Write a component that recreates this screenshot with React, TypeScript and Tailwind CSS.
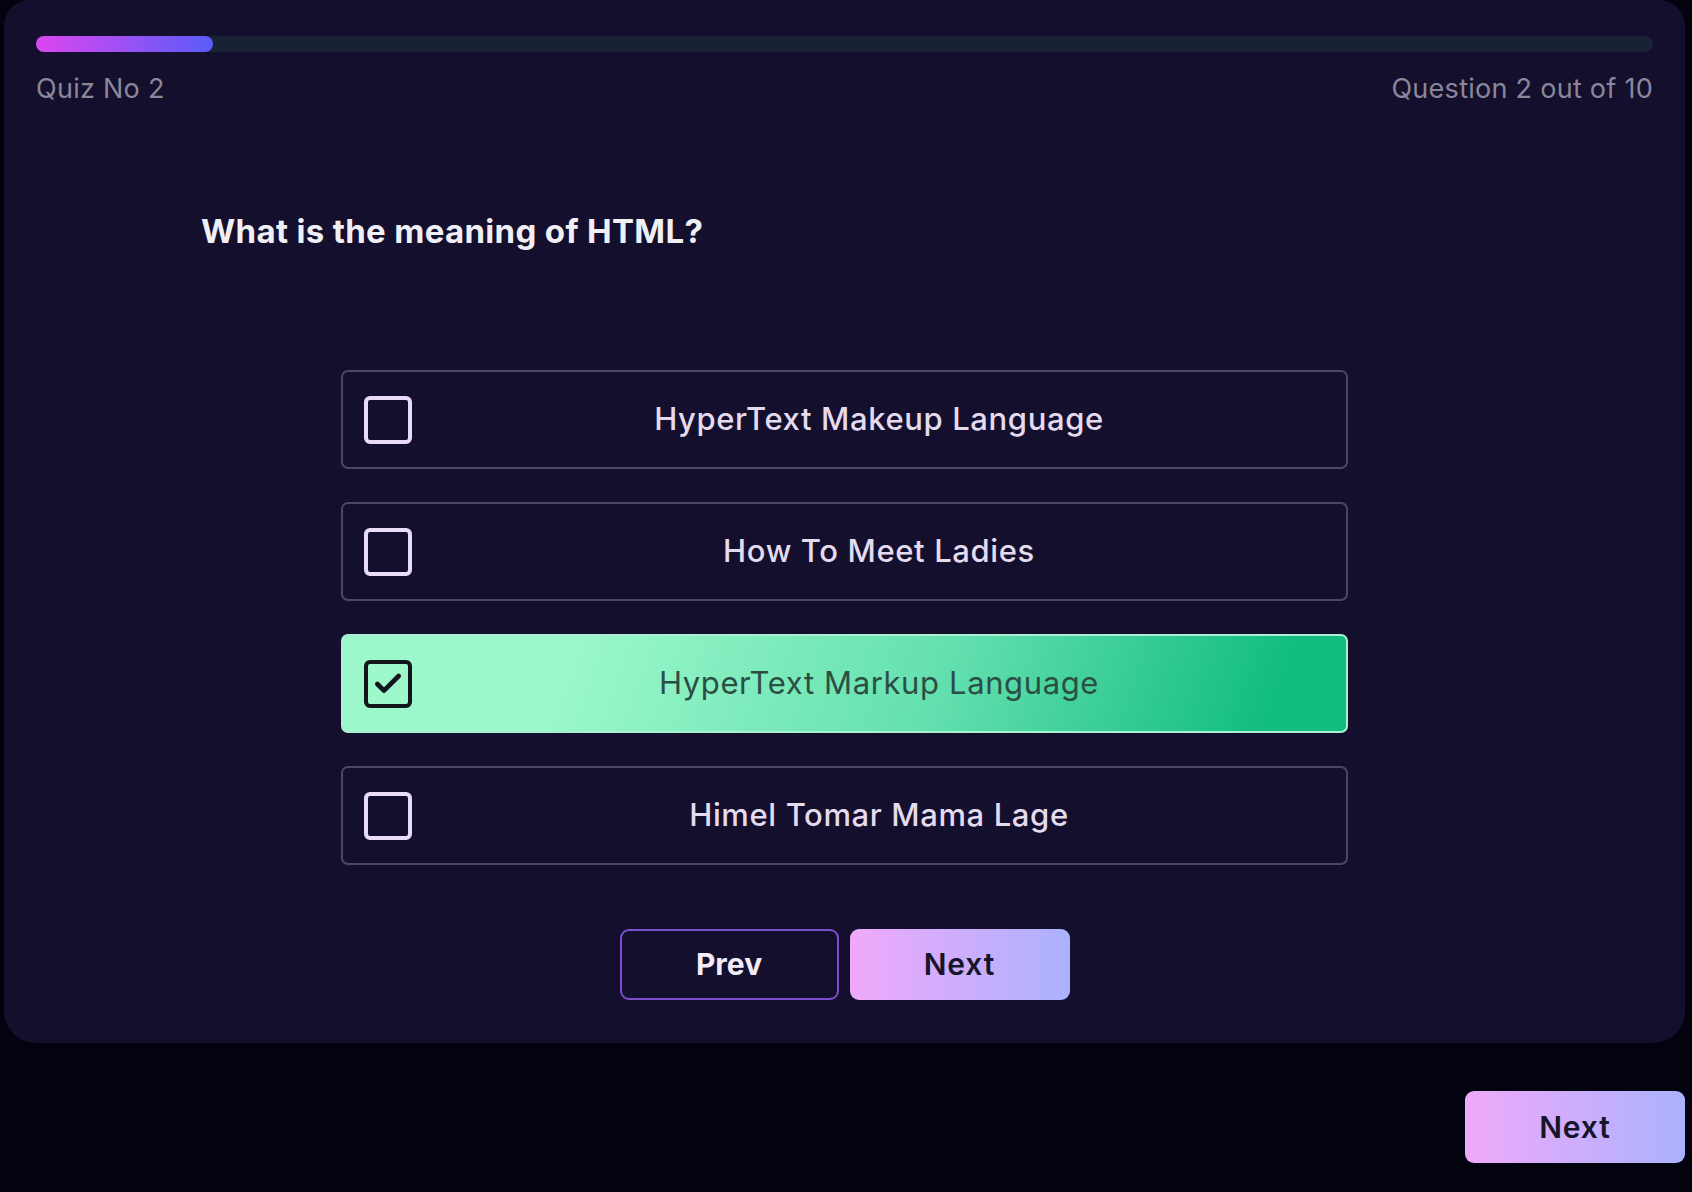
import { Check } from "lucide-react";

const options = [
  { label: "HyperText Makeup Language", checked: false },
  { label: "How To Meet Ladies", checked: false },
  { label: "HyperText Markup Language", checked: true },
  { label: "Himel Tomar Mama Lage", checked: false },
];

const OptionRow = ({ label, checked }: { label: string; checked: boolean }) => {
  return (
    <div
      className={
        checked
          ? "flex h-[99px] items-center rounded-[7px] border-2 border-[#a9f1d2] bg-[linear-gradient(110deg,#9cf8cb_22%,#62dfae_60%,#12bd7e_92%)] pl-[21px]"
          : "flex h-[99px] items-center rounded-[7px] border-2 border-[#4d4666] pl-[21px]"
      }
    >
      <div
        className={
          checked
            ? "flex h-12 w-12 items-center justify-center rounded-[6px] border-4 border-[#13141c]"
            : "h-12 w-12 rounded-[6px] border-4 border-[#e8dcf6]"
        }
      >
        {checked && <Check className="h-8 w-8 text-[#13141c]" strokeWidth={3.5} />}
      </div>
      <span
        className={
          checked
            ? "flex-1 text-center text-[31px] tracking-[0.02em] text-[#2b4f45]"
            : "flex-1 text-center text-[31px] font-medium tracking-[0.02em] text-[#e4dbef]"
        }
      >
        {label}
      </span>
    </div>
  );
};

export default function App() {
  return (
    <div className="min-h-screen bg-[#03030f] pl-[4px] pr-[7px] font-['Inter',sans-serif]">
      <div className="rounded-b-[32px] rounded-t-[26px] bg-[#140f2d] px-8 pb-[43px] pt-9">
        <div className="h-4 w-full rounded-full bg-[#182234]">
          <div className="h-4 w-[177px] rounded-full bg-[linear-gradient(90deg,#dc46f0,#5a5cf8)]" />
        </div>
        <div className="mt-[21px] flex justify-between text-[27px] leading-8 tracking-[0.01em] text-[#8b8699]">
          <span>Quiz No 2</span>
          <span>Question 2 out of 10</span>
        </div>

        <h1 className="mt-[106px] pl-[165px] text-[33px] font-bold leading-10 tracking-[0.01em] text-[#f0eff6]">
          What is the meaning of HTML?
        </h1>

        <div className="mx-auto mt-[119px] flex w-[1007px] flex-col gap-[33px]">
          {options.map((o) => (
            <OptionRow key={o.label} label={o.label} checked={o.checked} />
          ))}
        </div>

        <div className="mt-16 flex justify-center gap-[11px]">
          <button className="h-[71px] w-[219px] rounded-[9px] border-2 border-[#7b4fd0] text-[30px] font-bold text-[#f1ecf8]">
            Prev
          </button>
          <button className="h-[71px] w-[220px] rounded-[9px] bg-[linear-gradient(90deg,#f0a9fb,#aab2fd)] text-[30px] font-semibold tracking-[0.03em] text-[#17152a]">
            Next
          </button>
        </div>
      </div>

      <div className="mt-12 flex justify-end">
        <button className="h-[72px] w-[220px] rounded-[9px] bg-[linear-gradient(90deg,#f0a9fb,#aab2fd)] text-[30px] font-semibold tracking-[0.03em] text-[#17152a]">
          Next
        </button>
      </div>
    </div>
  );
}
